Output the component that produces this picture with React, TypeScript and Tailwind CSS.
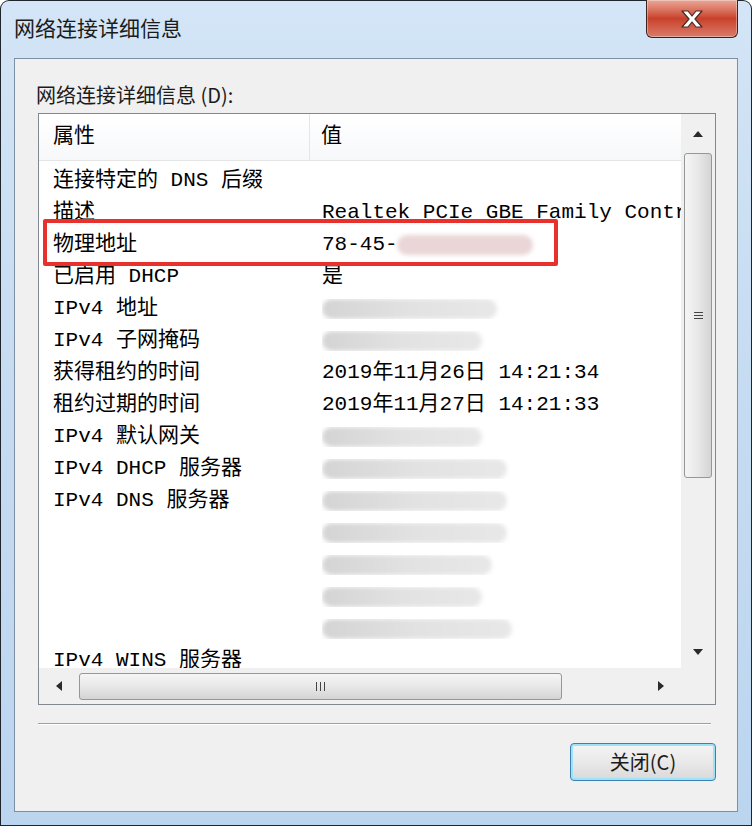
import React from 'react';

interface Row {
  name: string;
  value?: string;
  blur?: number;
  pink?: boolean;
}

const rows: Row[] = [
  { name: '连接特定的 DNS 后缀' },
  { name: '描述', value: 'Realtek PCIe GBE Family Controller' },
  { name: '物理地址', value: '78-45-', blur: 136, pink: true },
  { name: '已启用 DHCP', value: '是' },
  { name: 'IPv4 地址', blur: 175 },
  { name: 'IPv4 子网掩码', blur: 160 },
  { name: '获得租约的时间', value: '2019年11月26日 14:21:34' },
  { name: '租约过期的时间', value: '2019年11月27日 14:21:33' },
  { name: 'IPv4 默认网关', blur: 160 },
  { name: 'IPv4 DHCP 服务器', blur: 185 },
  { name: 'IPv4 DNS 服务器', blur: 185 },
  { name: '', blur: 185 },
  { name: '', blur: 170 },
  { name: '', blur: 160 },
  { name: '', blur: 190 },
  { name: 'IPv4 WINS 服务器' },
];

const uiFont = { fontFamily: '"Noto Sans CJK SC", "Noto Sans", sans-serif' };
const listFont = { fontFamily: '"Liberation Mono", "Noto Sans CJK SC", monospace' };

const Arrow = ({ dir }: { dir: 'up' | 'down' | 'left' | 'right' }) => {
  const pts = {
    up: '0,7 5,1 10,7',
    down: '0,1 5,7 10,1',
    left: '7,0 1,5 7,10',
    right: '1,0 7,5 1,10',
  }[dir];
  const vertical = dir === 'up' || dir === 'down';
  return (
    <svg width={vertical ? 10 : 8} height={vertical ? 8 : 10} viewBox={vertical ? '0 0 10 8' : '0 0 8 10'}>
      <polygon points={pts} fill="#2a2a2a" />
    </svg>
  );
};

export default function App() {
  return (
    <div className="w-[752px] h-[826px] bg-[#1f252c] p-px rounded-t-[9px] overflow-hidden">
      <div className="h-full flex flex-col rounded-t-[8px] bg-gradient-to-b from-[#d3e5f6] via-[#c5dbf1] to-[#bcd5ef] px-[13px] pb-[13px]">
        {/* title bar */}
        <div className="h-[57px] flex items-start justify-between">
          <div className="pt-[12px] text-[21px] text-[#1b1b1b] leading-[28px]" style={uiFont}>
            网络连接详细信息
          </div>
          <div className="w-[92px] h-[38px] -mt-px rounded-b-[6px] border border-t-0 border-[#3b2420] bg-gradient-to-b from-[#e9a797] via-[#c8402b] to-[#d87b69] flex items-center justify-center shadow-[inset_0_0_0_1px_rgba(255,255,255,0.35)]">
            <svg width="26" height="20" viewBox="0 0 26 20">
              <path
                d="M3 2 H9 L13 7 L17 2 H23 L16 10 L23 18 H17 L13 13 L9 18 H3 L10 10 Z"
                fill="#ffffff"
                stroke="#4a2a26"
                strokeWidth="1.2"
                strokeLinejoin="round"
              />
            </svg>
          </div>
        </div>

        {/* client area */}
        <div className="flex-1 bg-[#f0f0f0] border border-[#7f8fa3] flex flex-col pl-[23px] pr-[21px]">
          <div className="mt-[22px] ml-[-2px] text-[20px] leading-[28px] text-[#1b1b1b]" style={uiFont}>
            网络连接详细信息 (D):
          </div>

          {/* list box */}
          <div className="relative mt-[4px] h-[592px] border border-[#828790] bg-white grid grid-cols-[1fr_34px] grid-rows-[1fr_36px]">
            <div className="overflow-hidden" style={listFont}>
              <div className="h-[47px] flex items-center border-b border-[#e5e5e5] bg-gradient-to-b from-white to-[#f7f8fa] text-[21px] text-black">
                <div className="w-[271px] h-full flex items-center pl-[14px] border-r border-[#e6e6e6]">属性</div>
                <div className="pl-[11px]">值</div>
              </div>
              <div className="pt-[4px]">
                {rows.map((r, i) => (
                  <div key={i} className="h-[32px] flex items-center text-[21px] text-black whitespace-nowrap">
                    <div className="w-[283px] shrink-0 pl-[14px]">{r.name}</div>
                    <div className="flex-1 flex items-center overflow-hidden">
                      {r.value && <span>{r.value}</span>}
                      {r.blur && (
                        <div
                          className={
                            r.pink
                              ? 'h-[20px] rounded-full bg-[#ead6d6] blur-[2px] -ml-[1px]'
                              : 'h-[20px] rounded-full bg-gradient-to-r from-[#d4d4d4] via-[#e2e2e2] to-[#e8e8e8] blur-[2px]'
                          }
                          style={{ width: r.blur }}
                        />
                      )}
                    </div>
                  </div>
                ))}
              </div>
            </div>

            {/* vertical scrollbar */}
            <div className="bg-[#f0f0f0] flex flex-col items-center">
              <div className="h-[39px] w-full flex items-center justify-center">
                <Arrow dir="up" />
              </div>
              <div className="h-[325px] w-[28px] rounded-[3px] border border-[#979797] bg-gradient-to-r from-[#f5f5f5] via-[#e8e8e8] to-[#d4d4d4] flex items-center justify-center">
                <div className="flex flex-col gap-[2px]">
                  <div className="w-[9px] h-px bg-[#444]" />
                  <div className="w-[9px] h-px bg-[#444]" />
                  <div className="w-[9px] h-px bg-[#444]" />
                </div>
              </div>
              <div className="flex-1" />
              <div className="h-[33px] w-full flex items-center justify-center">
                <Arrow dir="down" />
              </div>
            </div>

            {/* horizontal scrollbar */}
            <div className="bg-[#f0f0f0] flex items-center">
              <div className="w-[40px] h-full flex items-center justify-center">
                <Arrow dir="left" />
              </div>
              <div className="w-[483px] h-[27px] rounded-[3px] border border-[#979797] bg-gradient-to-b from-[#f5f5f5] via-[#e8e8e8] to-[#d4d4d4] flex items-center justify-center">
                <div className="flex gap-[3px]">
                  <div className="w-px h-[9px] bg-[#444]" />
                  <div className="w-px h-[9px] bg-[#444]" />
                  <div className="w-px h-[9px] bg-[#444]" />
                </div>
              </div>
              <div className="flex-1" />
              <div className="w-[40px] h-full flex items-center justify-center">
                <Arrow dir="right" />
              </div>
            </div>
            <div className="bg-[#f0f0f0]" />

            {/* red highlight */}
            <div className="absolute left-[4px] top-[105px] w-[515px] h-[47px] border-4 border-[#e8302c] rounded-[2px]" />
          </div>

          {/* separator */}
          <div className="mt-[18px] mr-[5px] border-t border-[#a0a0a0] border-b border-b-white" />

          <div className="flex justify-end mt-[18px]">
            <button
              className="w-[146px] h-[38px] rounded-[4px] border border-[#3c7fb1] bg-gradient-to-b from-[#f4f4f4] via-[#e9e9e9] to-[#d9d9d9] shadow-[inset_0_0_0_2px_#9ee2f7] text-[20px] text-[#1b1b1b] flex items-center justify-center"
              style={uiFont}
            >
              关闭(C)
            </button>
          </div>
        </div>
      </div>
    </div>
  );
}
